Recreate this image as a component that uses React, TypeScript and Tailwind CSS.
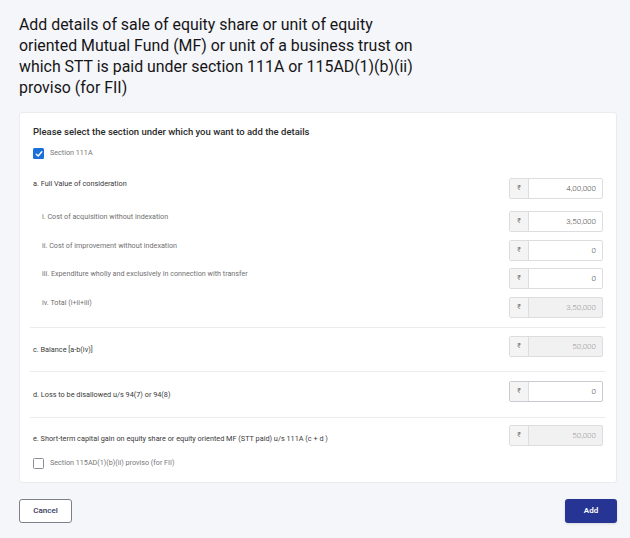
import React from 'react'

const font = { fontFamily: 'Roboto, "Noto Sans", sans-serif' }

function Amount({ value, disabled = false, strong = false }: { value: string; disabled?: boolean; strong?: boolean }) {
  return (
    <div
      className={`flex h-[21px] w-[94px] shrink-0 rounded-[2px] border ${strong ? 'border-[#c9cbd1]' : 'border-[#dcdde1]'} ${disabled ? 'bg-[#f1f1f2]' : 'bg-white'}`}
    >
      <div className="flex w-[19px] items-center justify-center border-r border-[#dcdde1] bg-[#f4f4f5] text-[7px] text-[#777]">₹</div>
      <div className={`flex flex-1 items-center justify-end pr-[6px] text-[8px] font-light ${disabled ? 'text-[#9a9a9a]' : 'text-[#4a4a4a]'}`}>{value}</div>
    </div>
  )
}

function Check({ checked }: { checked: boolean }) {
  return checked ? (
    <div className="flex h-[11px] w-[11px] items-center justify-center rounded-[1.5px] bg-[#1a6fd8]">
      <svg width="8" height="8" viewBox="0 0 8 8" fill="none">
        <path d="M1.3 4.2 L3.2 6 L6.8 1.8" stroke="white" strokeWidth="1.4" strokeLinecap="round" strokeLinejoin="round" />
      </svg>
    </div>
  ) : (
    <div className="h-[11px] w-[11px] rounded-[1.5px] border border-[#8a8d94] bg-white" />
  )
}

function SubRow({ label, value, disabled, mt }: { label: string; value: string; disabled?: boolean; mt: string }) {
  return (
    <div className={`flex items-start justify-between ${mt}`}>
      <span className="pl-[9px] pt-[1px] text-[7.2px] leading-[9px] text-[#707070]">{label}</span>
      <Amount value={value} disabled={disabled} />
    </div>
  )
}

export default function App() {
  return (
    <div className="min-h-[538px] w-[630px] bg-[#f5f6fa] pl-[19px] pr-[13px] pt-[14px]" style={font}>
      <h1 className="text-[15.9px] font-normal leading-[21px] text-[#151517]">
        Add details of sale of equity share or unit of equity
        <br />
        oriented Mutual Fund (MF) or unit of a business trust on
        <br />
        which STT is paid under section 111A or 115AD(1)(b)(ii)
        <br />
        proviso (for FII)
      </h1>

      <div className="mt-[14px] rounded-[3px] border border-[#eaebef] bg-white pb-[13px] pt-[13px]">
        <div className="px-[13px]">
          <p className="text-[9.5px] font-medium leading-[12px] text-[#2b2b2b]">Please select the section under which you want to add the details</p>
          <div className="mt-[10px] flex items-center gap-[6px]">
            <Check checked />
            <span className="text-[7.2px] text-[#777]">Section 111A</span>
          </div>

          <div className="mt-[19px] flex items-start justify-between">
            <span className="pt-[1px] text-[7.3px] leading-[9px] text-[#3a3a3a]">a. Full Value of consideration</span>
            <Amount value="4,00,000" />
          </div>
          <SubRow mt="mt-[12px]" label="i. Cost of acquisition without indexation" value="3,50,000" />
          <SubRow mt="mt-[8px]" label="ii. Cost of improvement without indexation" value="0" />
          <SubRow mt="mt-[7px]" label="iii. Expenditure wholly and exclusively in connection with transfer" value="0" />
          <SubRow mt="mt-[8px]" label="iv. Total (i+ii+iii)" value="3,50,000" disabled />
        </div>

        <div className="mx-[10px] mt-[9px] border-t border-[#ececef]" />

        <div className="mt-[8px] flex items-center justify-between px-[13px]">
          <span className="pt-[6px] text-[7.3px] leading-[9px] text-[#3a3a3a]">c. Balance [a-b(iv)]</span>
          <Amount value="50,000" disabled />
        </div>

        <div className="mx-[10px] mt-[14px] border-t border-[#ececef]" />

        <div className="mt-[9px] flex items-center justify-between px-[13px]">
          <span className="pt-[6px] text-[7.3px] leading-[9px] text-[#3a3a3a]">d. Loss to be disallowed u/s 94(7) or 94(8)</span>
          <Amount value="0" strong />
        </div>

        <div className="mx-[10px] mt-[15px] border-t border-[#ececef]" />

        <div className="px-[13px]">
          <div className="mt-[7px] flex items-center justify-between">
            <span className="pt-[6px] text-[7.3px] leading-[9px] text-[#3a3a3a]">e. Short-term capital gain on equity share or equity oriented MF (STT paid) u/s 111A (c + d )</span>
            <Amount value="50,000" disabled />
          </div>
          <div className="mt-[12px] flex items-center gap-[6px]">
            <Check checked={false} />
            <span className="text-[7.2px] text-[#777]">Section 115AD(1)(b)(ii) proviso (for FII)</span>
          </div>
        </div>
      </div>

      <div className="mt-[16px] flex items-center justify-between">
        <button className="h-[24px] w-[53px] rounded-[3px] border border-[#7d8089] bg-white text-[8px] font-medium text-[#343a5c]">Cancel</button>
        <button className="h-[24px] w-[52px] rounded-[3px] bg-[#263593] text-[8px] font-semibold text-white shadow-sm">Add</button>
      </div>
    </div>
  )
}
